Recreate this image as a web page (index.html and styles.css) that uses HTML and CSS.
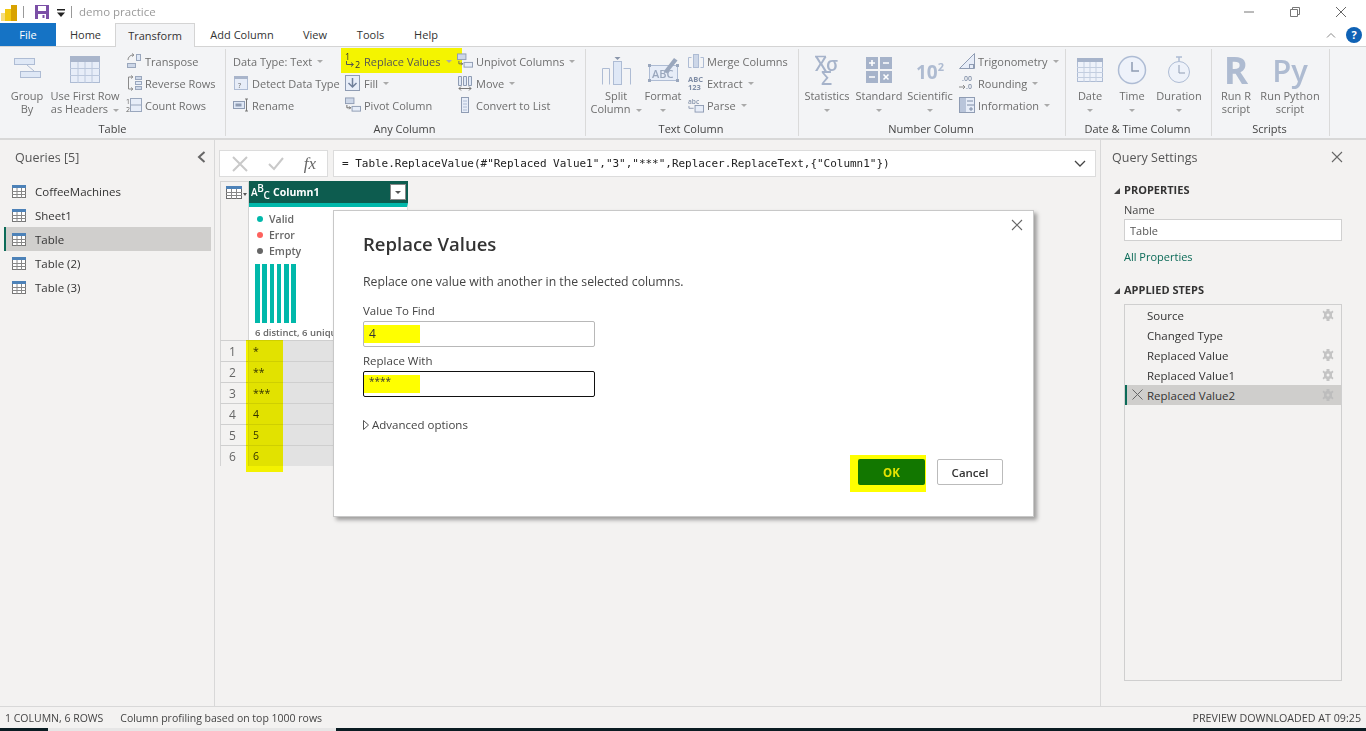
FILE: index.html
```html
<!DOCTYPE html>
<html lang="en">
<head>
<meta charset="utf-8">
<title>demo practice</title>
<link rel="stylesheet" href="styles.css">
</head>
<body>
<div class="app">
  <header class="titlebar">
    <svg class="logo" width="18" height="20" viewBox="0 0 18 20"><rect x="1" y="11" width="6" height="8" fill="#f6dc7a"/><rect x="5" y="7" width="6" height="12" fill="#f2c811"/><rect x="11" y="3" width="6" height="16" fill="#d8a200"/></svg>
    <span class="tsep"></span>
    <svg class="save" width="16" height="16" viewBox="0 0 16 16"><path d="M1 1h14v14H1z" fill="#7b4fa6"/><rect x="4" y="2" width="8" height="5" fill="#fff"/><rect x="4" y="10" width="8" height="5" fill="#fff"/><rect x="8.500" y="11" width="2" height="3" fill="#7b4fa6"/></svg>
    <svg class="qat" width="8" height="8" viewBox="0 0 8 8"><rect x="0" y="0" width="8" height="1.500" fill="#222"/><path d="M0 3.500h8L4 8z" fill="#222"/></svg>
    <span class="tsep tsep2"></span>
    <span class="doc">demo practice</span>
    <div class="winctl">
      <svg width="12" height="12" viewBox="0 0 12 12"><path d="M1 6h10" stroke="#777"/></svg>
      <svg width="12" height="12" viewBox="0 0 12 12"><path d="M1.500 3.500h7v7h-7zM3.500 3.500v-2h7v7h-2" fill="none" stroke="#777"/></svg>
      <svg width="12" height="12" viewBox="0 0 12 12"><path d="M1 1l10 10M11 1L1 11" stroke="#666"/></svg>
    </div>
  </header>

  <nav class="tabs">
    <span class="tab file">File</span>
    <span class="tab home">Home</span>
    <span class="tab active">Transform</span>
    <span class="tab addc">Add Column</span>
    <span class="tab view">View</span>
    <span class="tab tools">Tools</span>
    <span class="tab help">Help</span>
    <div class="tabs-right">
      <svg width="10" height="6" viewBox="0 0 10 6"><path d="M1 5.500l4-4 4 4" fill="none" stroke="#888"/></svg>
      <span class="helpbtn">?</span>
    </div>
  </nav>

  <section class="ribbon">
    <div class="group g-table">
      <div class="gbody">
        <div class="big w44">
          <div class="bicon"><svg width="30" height="32" viewBox="0 0 30 32"><rect x="2.500" y="4.500" width="20" height="6" fill="#dfe8f6" stroke="#aebcd4"/><rect x="8.500" y="17.500" width="20" height="6" fill="#dfe8f6" stroke="#aebcd4"/><path d="M15 11l7 6" stroke="#aebcd4"/></svg></div>
          <span>Group<br>By</span>
        </div>
        <div class="big w72">
          <div class="bicon"><svg width="30" height="28" viewBox="0 0 30 28"><rect x=".5" y=".5" width="29" height="26" fill="#e7edf8" stroke="#aebcd4"/><rect x="0" y="0" width="30" height="6" fill="#a9b5cb"/><path d="M8 6v21M15 6v21M22 6v21M0 12.500h30M0 19.500h30" stroke="#bcc8dd"/></svg></div>
          <span>Use First Row<br>as Headers<i class="caret"></i></span>
        </div>
        <div class="col ml5">
          <div class="item"><svg class="ic" width="16" height="16" viewBox="0 0 16 16"><rect x="10.500" y="1.500" width="4" height="6" fill="#dfe8f6" stroke="#9aa7bd"/><rect x="1.500" y="10.500" width="8" height="4" fill="#cdd7e8" stroke="#9aa7bd"/><path d="M2 7a5 5 0 0 1 5-5M6 .5L8 2 6 3.500" fill="none" stroke="#8a8a8a"/></svg>Transpose</div>
          <div class="item"><svg class="ic" width="16" height="16" viewBox="0 0 16 16"><rect x="9.500" y="1.500" width="6" height="3" fill="#cdd7e8" stroke="#9aa7bd"/><rect x="9.500" y="6.500" width="6" height="3" fill="#dfe8f6" stroke="#9aa7bd"/><rect x="9.500" y="11.500" width="6" height="3" fill="#cdd7e8" stroke="#9aa7bd"/><path d="M6 2H2.500v12H6M5 .5L7 2 5 3.500M5 12.500L7 14l-2 1.500" fill="none" stroke="#8a8a8a"/></svg>Reverse Rows</div>
          <div class="item"><svg class="ic" width="16" height="16" viewBox="0 0 16 16"><rect x="4.500" y="1.500" width="11" height="13" fill="#e7edf8" stroke="#9aa7bd"/><path d="M4.500 8h11" stroke="#9aa7bd"/><text x="0" y="7" class="tiny">1</text><text x="0" y="15" class="tiny">2</text></svg>Count Rows</div>
        </div>
      </div>
      <div class="glabel">Table</div>
    </div>

    <div class="group g-any">
      <div class="gbody">
        <div class="col cw112">
          <div class="item">Data Type: Text<i class="caret"></i></div>
          <div class="item"><svg class="ic" width="16" height="16" viewBox="0 0 16 16"><rect x="1.500" y="1.500" width="13" height="13" fill="#e7edf8" stroke="#aebcd4"/><rect x="1" y="1" width="14" height="3" fill="#a9b5cb"/><text x="5" y="13" class="tiny">?</text></svg>Detect Data Type</div>
          <div class="item"><svg class="ic" width="16" height="16" viewBox="0 0 16 16"><rect x=".5" y="4.500" width="11" height="7" fill="#dfe8f6" stroke="#8f9cb3"/><rect x="2.500" y="6.500" width="6" height="3" fill="#8f9cb3"/><path d="M12 2h3M12 14h3M13.500 2v12" stroke="#777"/></svg>Rename</div>
        </div>
        <div class="col cw112">
          <div class="item hl"><svg class="ic" width="16" height="18" viewBox="0 0 16 18"><text x="0" y="8" class="tinyd">1</text><text x="10" y="16" class="tinyd">2</text><path d="M1.500 9v3.500H8M6 10.500l2.500 2-2.500 2" fill="none" stroke="#555"/></svg>Replace Values<i class="caret"></i></div>
          <div class="item"><svg class="ic" width="16" height="16" viewBox="0 0 16 16"><rect x=".5" y=".5" width="14" height="15" fill="#e7edf8" stroke="#8f9cb3"/><path d="M7.500 3v9M3.500 8l4 4 4-4" fill="none" stroke="#6f7f9a" stroke-width="1.500"/></svg>Fill<i class="caret"></i></div>
          <div class="item"><svg class="ic" width="17" height="16" viewBox="0 0 17 16"><rect x=".5" y=".5" width="9" height="6" fill="#cdd7e8" stroke="#8f9cb3"/><rect x="7.500" y="9.500" width="9" height="5" fill="#e7edf8" stroke="#8f9cb3"/><path d="M2 8v3h4M4.500 9.500L6 11l-1.500 1.500" fill="none" stroke="#666"/></svg>Pivot Column</div>
        </div>
        <div class="col">
          <div class="item"><svg class="ic" width="17" height="16" viewBox="0 0 17 16"><rect x=".5" y=".5" width="9" height="6" fill="#cdd7e8" stroke="#8f9cb3"/><rect x="7.500" y="9.500" width="9" height="5" fill="#e7edf8" stroke="#8f9cb3"/><path d="M2 8v3h4M4.500 9.500L6 11l-1.500 1.500" fill="none" stroke="#666"/></svg>Unpivot Columns<i class="caret"></i></div>
          <div class="item"><svg class="ic" width="16" height="16" viewBox="0 0 16 16"><path d="M1.500 1.500h3v9h-3zM6.500 1.500h3v9h-3zM11.500 1.500h3v9h-3z" fill="#dfe8f6" stroke="#8f9cb3"/><path d="M2 13.500h12M4 11.500l-2 2 2 2M12 11.500l2 2-2 2" fill="none" stroke="#777"/></svg>Move<i class="caret"></i></div>
          <div class="item"><svg class="ic" width="16" height="16" viewBox="0 0 16 16"><rect x="4.500" y=".5" width="7" height="15" fill="#e7edf8" stroke="#8f9cb3"/><path d="M6 4h4M6 7h4M6 10h4M6 13h4" stroke="#aebcd4"/></svg>Convert to List</div>
        </div>
      </div>
      <div class="glabel">Any Column</div>
    </div>

    <div class="group g-text">
      <div class="gbody">
        <div class="big w60">
          <div class="bicon"><svg width="30" height="30" viewBox="0 0 30 30"><rect x="12.500" y="6.500" width="8" height="23" fill="#dfe8f6" stroke="#aebcd4"/><path d="M1.500 29.500v-16h7v16M22.500 13.500h7v16" fill="#f3f4f6" stroke="#aebcd4"/><path d="M13.500 2h6l-3 3z" fill="#8a96ab"/></svg></div>
          <span>Split<br>Column<i class="caret"></i></span>
        </div>
        <div class="big w34">
          <div class="bicon"><svg class="ovis" width="32" height="28" viewBox="0 0 32 28"><rect x="2.500" y="9.500" width="28" height="15" fill="#e7edf8" stroke="#aebcd4"/><path d="M1 8h3v3H1zM29 8h3v3h-3zM1 23h3v3H1zM29 23h3v3h-3z" fill="#9aa7bd"/><text x="5" y="22" class="abc">ABC</text><path d="M17 15L27 2l3.500 2.500L20 17.500z" fill="#9aa7bd"/></svg></div>
          <span>Format<br><i class="caret solo"></i></span>
        </div>
        <div class="col ml8">
          <div class="item"><svg class="ic" width="16" height="16" viewBox="0 0 16 16"><rect x="5.500" y="1.500" width="5" height="13" fill="#cdd7e8" stroke="#aebcd4"/><path d="M3.500 4.500h-3v10h3M12.500 4.500h3v10h-3" fill="none" stroke="#aebcd4"/></svg>Merge Columns</div>
          <div class="item"><span class="ic stack">ABC<br>123</span>Extract<i class="caret"></i></div>
          <div class="item"><svg class="ic" width="17" height="16" viewBox="0 0 17 16"><text x="0" y="7" class="tinyb">abc</text><rect x="7.500" y="8.500" width="9" height="7" fill="#e7edf8" stroke="#8f9cb3"/><path d="M1 9v2.500h5" fill="none" stroke="#8f9cb3"/></svg>Parse<i class="caret"></i></div>
        </div>
      </div>
      <div class="glabel">Text Column</div>
    </div>

    <div class="group g-num">
      <div class="gbody">
        <div class="big w56">
          <div class="bicon"><svg class="ovis" width="30" height="32" viewBox="0 0 30 32"><path d="M3 2.500h11" stroke="#a6b3ca" stroke-width="1.500"/><text x="3" y="17" class="bigsym">X</text><text x="14" y="17" class="bigsym">σ</text><text x="9" y="31" class="bigsym">Σ</text></svg></div>
          <span>Statistics<br><i class="caret solo"></i></span>
        </div>
        <div class="big w48">
          <div class="bicon"><svg width="26" height="26" viewBox="0 0 26 26"><rect width="12" height="12" fill="#a6b3ca"/><rect x="14" width="12" height="12" fill="#a6b3ca"/><rect y="14" width="12" height="12" fill="#a6b3ca"/><rect x="14" y="14" width="12" height="12" fill="#a6b3ca"/><path d="M3 6h6M6 3v6M17 6h6M3 20h6M17.500 17.500l5 5M22.500 17.500l-5 5" stroke="#fff" stroke-width="1.600"/></svg></div>
          <span>Standard<br><i class="caret solo"></i></span>
        </div>
        <div class="big w54">
          <div class="bicon"><span class="ten">10<sup>2</sup></span></div>
          <span>Scientific<br><i class="caret solo"></i></span>
        </div>
        <div class="col ml2">
          <div class="item"><svg class="ic" width="16" height="16" viewBox="0 0 16 16"><path d="M.5 15.500L15.500 .5v15z" fill="#e7edf8" stroke="#8f9cb3"/><rect x="10.500" y="11.500" width="4" height="4" fill="none" stroke="#8f9cb3"/></svg>Trigonometry<i class="caret"></i></div>
          <div class="item"><svg class="ic" width="16" height="16" viewBox="0 0 16 16"><text x="3" y="6" class="tinyb">.00</text><text x="7" y="14" class="tinyb">.0</text><path d="M0 12h6M4 10l2 2-2 2" fill="none" stroke="#8a8a8a"/></svg>Rounding<i class="caret"></i></div>
          <div class="item"><svg class="ic" width="16" height="16" viewBox="0 0 16 16"><rect x=".5" y=".5" width="15" height="15" fill="#e7edf8" stroke="#8f9cb3"/><rect x="1" y="1" width="6" height="14" fill="#b9c5da"/><path d="M8 8h7M8 4h6M10 12h4M12 10v4" stroke="#7f8da6"/></svg>Information<i class="caret"></i></div>
        </div>
      </div>
      <div class="glabel">Number Column</div>
    </div>

    <div class="group g-date">
      <div class="gbody">
        <div class="big w48">
          <div class="bicon"><svg width="26" height="24" viewBox="0 0 26 24"><rect x=".5" y=".5" width="25" height="23" fill="#eef2fa" stroke="#aebcd4"/><rect width="26" height="4" fill="#a6b3ca"/><path d="M7 4v20M13 4v20M19 4v20M0 9.500h26M0 14.500h26M0 19.500h26" stroke="#c3cee0"/></svg></div>
          <span>Date<br><i class="caret solo"></i></span>
        </div>
        <div class="big w36">
          <div class="bicon"><svg width="30" height="30" viewBox="0 0 30 30"><circle cx="15" cy="15" r="13.500" fill="#eef2fa" stroke="#aebcd4" stroke-width="1.500"/><path d="M15 7v9h7" fill="none" stroke="#8f9cb3" stroke-width="1.500"/></svg></div>
          <span>Time<br><i class="caret solo"></i></span>
        </div>
        <div class="big w58">
          <div class="bicon"><svg width="24" height="28" viewBox="0 0 24 28"><path d="M9 1h6M12 1v4" stroke="#aebcd4" stroke-width="1.500"/><circle cx="12" cy="16" r="10.500" fill="#eef2fa" stroke="#aebcd4"/><path d="M12 9v8h6" fill="none" stroke="#8f9cb3"/></svg></div>
          <span>Duration<br><i class="caret solo"></i></span>
        </div>
      </div>
      <div class="glabel">Date &amp; Time Column</div>
    </div>

    <div class="group g-scripts">
      <div class="gbody">
        <div class="big w48">
          <div class="bicon"><span class="rpy">R</span></div>
          <span>Run R<br>script</span>
        </div>
        <div class="big w60">
          <div class="bicon"><span class="rpy py">Py</span></div>
          <span>Run Python<br>script</span>
        </div>
      </div>
      <div class="glabel">Scripts</div>
    </div>
  </section>

  <main class="main">
    <aside class="queries">
      <div class="qhead"><span>Queries [5]</span>
        <svg width="9" height="12" viewBox="0 0 9 12"><path d="M7.500 1L2 6l5.500 5" fill="none" stroke="#666" stroke-width="2"/></svg>
      </div>
      <ul class="qlist">
        <li class="q"><svg class="tbl" width="14" height="13" viewBox="0 0 14 13"><rect x=".5" y=".5" width="13" height="12" fill="#fff" stroke="#777"/><rect width="14" height="3" fill="#4d82b8"/><path d="M5 3v10M9.500 3v10M0 6.500h14M0 9.500h14" stroke="#888"/></svg>CoffeeMachines</li>
        <li class="q"><svg class="tbl" width="14" height="13" viewBox="0 0 14 13"><rect x=".5" y=".5" width="13" height="12" fill="#fff" stroke="#777"/><rect width="14" height="3" fill="#4d82b8"/><path d="M5 3v10M9.500 3v10M0 6.500h14M0 9.500h14" stroke="#888"/></svg>Sheet1</li>
        <li class="q sel"><svg class="tbl" width="14" height="13" viewBox="0 0 14 13"><rect x=".5" y=".5" width="13" height="12" fill="#fff" stroke="#777"/><rect width="14" height="3" fill="#4d82b8"/><path d="M5 3v10M9.500 3v10M0 6.500h14M0 9.500h14" stroke="#888"/></svg>Table</li>
        <li class="q"><svg class="tbl" width="14" height="13" viewBox="0 0 14 13"><rect x=".5" y=".5" width="13" height="12" fill="#fff" stroke="#777"/><rect width="14" height="3" fill="#4d82b8"/><path d="M5 3v10M9.500 3v10M0 6.500h14M0 9.500h14" stroke="#888"/></svg>Table (2)</li>
        <li class="q"><svg class="tbl" width="14" height="13" viewBox="0 0 14 13"><rect x=".5" y=".5" width="13" height="12" fill="#fff" stroke="#777"/><rect width="14" height="3" fill="#4d82b8"/><path d="M5 3v10M9.500 3v10M0 6.500h14M0 9.500h14" stroke="#888"/></svg>Table (3)</li>
      </ul>
    </aside>

    <section class="center">
      <div class="fbar">
        <div class="fbtns">
          <svg width="16" height="16" viewBox="0 0 16 16"><path d="M1 1l14 14M15 1L1 15" stroke="#c9c9c9" stroke-width="2"/></svg>
          <svg width="16" height="14" viewBox="0 0 16 14"><path d="M1 7l5 5L15 1" fill="none" stroke="#c9c9c9" stroke-width="2"/></svg>
          <span class="fx">fx</span>
        </div>
        <div class="formula"><span>= Table.ReplaceValue(#"Replaced Value1","3","***",Replacer.ReplaceText,{"Column1"})</span>
          <svg width="12" height="7" viewBox="0 0 12 7"><path d="M1 1l5 5 5-5" fill="none" stroke="#444" stroke-width="1.300"/></svg>
        </div>
      </div>

      <div class="grid">
        <div class="ghead">
          <div class="corner"><svg width="16" height="13" viewBox="0 0 16 13"><rect x=".5" y=".5" width="15" height="12" fill="#fff" stroke="#6a6a6a"/><rect width="16" height="3" fill="#4d82b8"/><path d="M5.500 3v10M10.500 3v10M0 6.500h16M0 9.500h16" stroke="#888"/></svg><i class="caret dark"></i></div>
          <div class="colhead"><span class="abcbadge">A<sup>B</sup><sub>C</sub></span><span class="colname">Column1</span><span class="filter"><i class="caret dark"></i></span></div>
        </div>
        <div class="gprof">
          <div class="rownum-spacer"></div>
          <div class="profile">
            <div class="qual"><i class="dot teal"></i>Valid</div>
            <div class="qual"><i class="dot red"></i>Error</div>
            <div class="qual"><i class="dot grey"></i>Empty</div>
            <div class="bars"><i></i><i></i><i></i><i></i><i></i><i></i></div>
            <div class="distinct">6 distinct, 6 unique</div>
          </div>
        </div>
        <div class="row"><span class="n">1</span><span class="v">*</span></div>
        <div class="row"><span class="n">2</span><span class="v">**</span></div>
        <div class="row"><span class="n">3</span><span class="v">***</span></div>
        <div class="row"><span class="n">4</span><span class="v">4</span></div>
        <div class="row"><span class="n">5</span><span class="v">5</span></div>
        <div class="row"><span class="n">6</span><span class="v">6</span></div>
        <div class="colmark"></div>
      </div>
    </section>

    <aside class="settings">
      <div class="shead"><span>Query Settings</span>
        <svg width="12" height="12" viewBox="0 0 12 12"><path d="M1 1l10 10M11 1L1 11" stroke="#666" stroke-width="1.100"/></svg>
      </div>
      <h3 class="sect"><i class="tri"></i>PROPERTIES</h3>
      <label class="nm">Name</label>
      <div class="nameinput">Table</div>
      <a class="allprops">All Properties</a>
      <h3 class="sect steps-h"><i class="tri"></i>APPLIED STEPS</h3>
      <ul class="steps">
        <li class="step">Source<svg class="gear" width="12" height="12" viewBox="0 0 12 12"><path d="M4.500 0h3v2l1.500.7L10.500 1.500l1 1.500L10 4.500V7.500l1.500 1.500-1 1.500L9 9.300 7.500 10v2h-3v-2L3 9.300 1.500 10.500l-1-1.500L2 7.500v-3L.5 3l1-1.500L3 2.700 4.500 2z" fill="#c4c4c4"/><circle cx="6" cy="6" r="1.500" fill="#f3f2f1"/></svg></li>
        <li class="step">Changed Type</li>
        <li class="step">Replaced Value<svg class="gear" width="12" height="12" viewBox="0 0 12 12"><path d="M4.500 0h3v2l1.500.7L10.500 1.500l1 1.500L10 4.500V7.500l1.500 1.500-1 1.500L9 9.300 7.500 10v2h-3v-2L3 9.300 1.500 10.500l-1-1.500L2 7.500v-3L.5 3l1-1.500L3 2.700 4.500 2z" fill="#c4c4c4"/><circle cx="6" cy="6" r="1.500" fill="#f3f2f1"/></svg></li>
        <li class="step">Replaced Value1<svg class="gear" width="12" height="12" viewBox="0 0 12 12"><path d="M4.500 0h3v2l1.500.7L10.500 1.500l1 1.500L10 4.500V7.500l1.500 1.500-1 1.500L9 9.300 7.500 10v2h-3v-2L3 9.300 1.500 10.500l-1-1.500L2 7.500v-3L.5 3l1-1.500L3 2.700 4.500 2z" fill="#c4c4c4"/><circle cx="6" cy="6" r="1.500" fill="#f3f2f1"/></svg></li>
        <li class="step cur"><svg class="del" width="11" height="11" viewBox="0 0 11 11"><path d="M.5.500l10 10M10.500.5l-10 10" stroke="#666"/></svg>Replaced Value2<svg class="gear" width="12" height="12" viewBox="0 0 12 12"><path d="M4.500 0h3v2l1.500.7L10.500 1.500l1 1.500L10 4.500V7.500l1.500 1.500-1 1.500L9 9.300 7.500 10v2h-3v-2L3 9.300 1.500 10.500l-1-1.500L2 7.500v-3L.5 3l1-1.500L3 2.700 4.500 2z" fill="#bdbdbd"/><circle cx="6" cy="6" r="1.500" fill="#cfcecc"/></svg></li>
      </ul>
    </aside>
  </main>

  <footer class="status">
    <span class="st1">1 COLUMN, 6 ROWS</span>
    <span>Column profiling based on top 1000 rows</span>
    <span class="st-r">PREVIEW DOWNLOADED AT 09:25</span>
  </footer>
  <div class="strip"><i></i></div>

  <div class="dialog">
    <svg class="dclose" width="12" height="12" viewBox="0 0 12 12"><path d="M1 1l10 10M11 1L1 11" stroke="#666" stroke-width="1.100"/></svg>
    <h2>Replace Values</h2>
    <p class="desc">Replace one value with another in the selected columns.</p>
    <label class="flabel">Value To Find</label>
    <div class="field"><span class="mark">4</span></div>
    <label class="flabel l2">Replace With</label>
    <div class="field focus"><span class="mark stars">****</span></div>
    <div class="adv"><svg width="6" height="10" viewBox="0 0 6 10"><path d="M.5.500l5 4.500-5 4.500z" fill="#fff" stroke="#555"/></svg>Advanced options</div>
    <div class="dbtns">
      <span class="okwrap"><button class="ok">OK</button></span>
      <button class="cancel">Cancel</button>
    </div>
  </div>
</div>
</body>
</html>
```

FILE: styles.css
```css
* { box-sizing: border-box; }
html, body { margin: 0; padding: 0; height: 100%; overflow: hidden; }
body { font-family: "Open Sans", "Noto Sans", sans-serif; font-size: 11px; color: #444; background: #f3f2f1; }
.app { position: relative; width: 1366px; height: 731px; display: flex; flex-direction: column; overflow: hidden; }
ul { list-style: none; margin: 0; padding: 0; }
h2, h3, p { margin: 0; }
i { font-style: normal; }

/* title bar */
.titlebar { height: 23px; background: #fff; display: flex; align-items: center; flex: none; }
.tsep { width: 1px; height: 12px; background: #999; margin-left: 5px; }
.save { margin-left: 10px; }
.qat { margin-left: 7px; margin-top: 3px; }
.tsep2 { margin-left: 6px; }
.doc { margin-left: 7px; color: #9a9a9a; font-size: 11.500px; }
.winctl { margin-left: auto; display: flex; gap: 34px; padding-right: 19px; }

/* tabs */
.tabs { height: 23px; background: #fff; display: flex; flex: none; position: relative; z-index: 2; }
.tab { display: flex; align-items: center; justify-content: center; color: #333; font-size: 11px; height: 23px; }
.tab.file { width: 56px; background: #1573c5; color: #fff; }
.tab.home { width: 59px; }
.tab.active { width: 80px; background: #f3f4f6; border: 1px solid #d4d4d4; border-bottom: 0; height: 24px; }
.tab.addc { width: 92px; padding-left: 2px; }
.tab.view { width: 56px; }
.tab.tools { width: 55px; }
.tab.help { width: 56px; }
.tabs-right { margin-left: auto; display: flex; align-items: center; gap: 10px; padding-right: 4px; }
.helpbtn { width: 16px; height: 16px; border-radius: 50%; background: #0f62b5; color: #fff; font-weight: 700; font-size: 11px; display: flex; align-items: center; justify-content: center; }

/* ribbon */
.ribbon { height: 92px; flex: none; display: flex; background: #f3f4f6; border-top: 1px solid #d4d4d4; isolation: isolate; }
.group { display: flex; flex-direction: column; margin: 2px 0; border-right: 1px solid #dadada; color: #6e6e6e; }
.g-table { width: 226px; padding-left: 5px; }
.g-any { width: 360px; padding-left: 7px; }
.g-text { width: 213px; }
.g-num { width: 267px; }
.g-date { width: 146px; }
.g-scripts { width: 118px; }
.gbody { flex: 1; display: flex; padding-top: 1px; min-height: 0; }
.glabel { height: 15px; line-height: 15px; text-align: center; color: #444; font-size: 11px; padding-right: 2px; }
.g-any .glabel { padding-right: 9px; }
.g-table .glabel { padding-right: 5px; }

.big { display: flex; flex-direction: column; align-items: center; text-align: center; line-height: 13px; }
.bicon { height: 39px; display: flex; align-items: center; justify-content: center; }
.w34 { width: 34px; } .w36 { width: 36px; } .w44 { width: 44px; } .w48 { width: 48px; }
.w54 { width: 54px; } .w56 { width: 56px; } .w58 { width: 58px; } .w60 { width: 60px; } .w72 { width: 72px; }
.col { display: flex; flex-direction: column; }
.cw112 { width: 112px; }
.ml2 { margin-left: 2px; } .ml5 { margin-left: 5px; } .ml8 { margin-left: 8px; }
.item { height: 22px; display: flex; align-items: center; white-space: nowrap; position: relative; }
.item.hl { color: #555; }
.item.hl::before { content: ""; position: absolute; z-index: -1; left: -4px; top: -2px; width: 121px; height: 25px; background: #f4f400; }
.ic { width: 16px; margin-right: 3px; flex: none; overflow: visible; }
.ovis { overflow: visible; }
.caret { display: inline-block; width: 0; height: 0; border: 3px solid transparent; border-top: 3px solid #aaa; border-bottom: 0; margin-left: 5px; vertical-align: middle; }
.caret.solo { margin-left: 0; }
.caret.dark { border-top-color: #555; }
.tiny { font-size: 7px; fill: #666; font-family: "Open Sans", sans-serif; }
.tinyd { font-size: 9px; fill: #333; font-family: "Open Sans", sans-serif; }
.tinyb { font-size: 7px; font-weight: 600; fill: #8492aa; font-family: "Open Sans", sans-serif; }
.abc { font-size: 11px; font-weight: 600; fill: #9aa7bd; font-family: "Open Sans", sans-serif; }
.bigsym { font-size: 19px; font-weight: 600; fill: #a6b3ca; font-family: "Open Sans", sans-serif; }
.stack { font-size: 7.500px; line-height: 8px; color: #7f8da6; font-weight: 700; }
.ten { color: #aebbd1; font-size: 19px; font-weight: 700; line-height: 1; padding-top: 6px; }
.ten sup { font-size: 11px; vertical-align: 8px; line-height: 0; }
.rpy { color: #aebbd1; font-size: 37px; font-weight: 700; line-height: 30px; height: 30px; }
.rpy.py { font-size: 31px; font-weight: 600; }

/* main */
.main { flex: 1; min-height: 0; display: flex; border-top: 2px solid #d8d8d8; }
.queries { width: 215px; flex: none; border-right: 1px solid #d8d8d8; padding-left: 4px; }
.qhead { height: 39px; display: flex; align-items: center; justify-content: space-between; padding: 0 8px 5px 11px; font-size: 12.500px; color: #555; }
.q { height: 24px; display: flex; align-items: center; padding-left: 8px; margin-right: 3px; color: #333; font-size: 11.500px; }
.tbl { margin-right: 9px; }
.q.sel { background: #d0cfcd; border-left: 2px solid #0b6b58; padding-left: 6px; }

.center { flex: 1; min-width: 0; position: relative; }
.fbar { display: flex; gap: 5px; padding: 10px 4px 0 4px; }
.fbtns { width: 109px; height: 27px; background: #fff; border: 1px solid #dcdcdc; display: flex; align-items: center; justify-content: space-between; padding: 0 11px 0 12px; }
.fx { font-family: "Liberation Serif", serif; font-style: italic; font-size: 17px; color: #666; }
.formula { flex: 1; height: 27px; background: #fff; border: 1px solid #dcdcdc; display: flex; align-items: center; justify-content: space-between; padding: 0 9px 0 8px; font-family: "DejaVu Sans Mono", monospace; font-size: 11px; letter-spacing: -0.025px; color: #222; white-space: nowrap; }

.grid { position: relative; width: 189px; margin: 4px 0 0 5px; }
.ghead { display: flex; height: 22px; }
.corner { width: 29px; background: #f3f2f1; border: 1px solid #d4d4d4; border-bottom: 0; display: flex; align-items: center; padding-left: 5px; }
.corner .caret { margin-left: 1px; margin-top: 3px; border-width: 2.500px; border-bottom: 0; border-top-width: 3px; }
.colhead { width: 159px; background: #0d5c4f; display: flex; align-items: center; color: #fff; font-weight: 700; font-size: 10.500px; padding-left: 2px; }
.abcbadge { font-size: 10px; font-weight: 600; width: 22px; line-height: 1; white-space: nowrap; letter-spacing: -0.300px; }
.abcbadge sup, .abcbadge sub { font-size: 10px; line-height: 0; }
.colname { flex: 1; }
.filter { width: 16px; height: 16px; background: #fff; margin-right: 2px; border: 1px solid #888; display: flex; align-items: center; justify-content: center; }
.filter .caret { margin: 0; }
.gprof { display: flex; height: 137px; }
.rownum-spacer { width: 29px; border-left: 1px solid #d4d4d4; border-right: 1px solid #d4d4d4; }
.profile { width: 159px; background: #fff; border-top: 4px solid #01b8aa; padding: 4px 0 0 6px; color: #666; border-right: 1px solid #e0e0e0; overflow: hidden; }
.qual { height: 16px; display: flex; align-items: center; font-size: 10.500px; font-weight: 600; color: #666; }
.dot { width: 6px; height: 6px; border-radius: 50%; margin: 0 6px 0 2px; }
.teal { background: #01b8aa; } .red { background: #fd625e; } .grey { background: #666; }
.bars { display: flex; gap: 2.700px; height: 59px; margin-top: 5px; }
.bars i { width: 4.600px; background: #01b8aa; }
.distinct { font-size: 9.500px; font-weight: 600; color: #666; margin-top: 3px; white-space: nowrap; }
.row { display: flex; height: 21px; border-top: 1px solid #cfcfcf; border-left: 1px solid #d4d4d4; background: #e2e2e2; }
.row:last-of-type { border-bottom: 1px solid #cfcfcf; height: 22px; }
.n { width: 28px; background: #f3f2f1; color: #666; text-align: center; font-size: 12px; line-height: 22px; border-right: 1px solid #d4d4d4; padding-right: 4px; }
.v { padding-left: 4px; color: #333; font-size: 10.500px; line-height: 20px; }
.colmark { position: absolute; left: 26px; top: 159px; width: 37px; height: 132px; background: #ffff00; mix-blend-mode: multiply; }

/* settings */
.settings { width: 266px; flex: none; border-left: 1px solid #d8d8d8; padding: 0 24px 0 23px; position: relative; }
.shead { height: 38px; display: flex; align-items: center; justify-content: space-between; margin: 0 -1px 0 -12px; font-size: 12.500px; color: #555; padding-bottom: 4px; }
.sect { font-size: 11px; font-weight: 700; color: #333; height: 23px; line-height: 24px; position: relative; }
.tri { position: absolute; left: -10px; top: 10px; border: 3.500px solid transparent; border-right-color: #444; border-bottom-color: #444; }
.nm { display: block; height: 18px; line-height: 17px; color: #444; font-size: 11px; }
.nameinput { height: 22px; width: 218px; background: #fff; border: 1px solid #d0d0d0; padding-left: 5px; line-height: 21px; color: #555; font-size: 11px; }
.allprops { display: block; color: #0b6b58; font-size: 11px; margin-top: 8px; height: 16px; line-height: 16px; }
.steps-h { margin-top: 13px; }
.steps { margin-top: 3px; width: 218px; height: 377px; border: 1px solid #cfcfcf; }
.step { height: 20px; display: flex; align-items: center; padding-left: 22px; color: #333; font-size: 11.500px; position: relative; }
.gear { position: absolute; right: 7px; top: 4px; }
.step.cur { background: #cfcecc; border-left: 2px solid #0b6b58; padding-left: 20px; }
.del { position: absolute; left: 5px; top: 4px; }

/* status */
.status { height: 22px; flex: none; border-top: 1px solid #d8d8d8; display: flex; align-items: center; padding: 0 5px; font-size: 10.500px; color: #444; }
.st1 { margin-right: 17px; }
.st-r { margin-left: auto; font-size: 10.700px; }
.strip { height: 3px; flex: none; background: #0a1c22; padding-left: 48px; }
.strip i { display: block; width: 288px; height: 3px; background: #e6e6e6; }

/* dialog */
.dialog { position: absolute; left: 333px; top: 210px; width: 701px; height: 307px; background: #fff; border: 1px solid #c8c8c8; box-shadow: 3px 3px 4px rgba(0,0,0,.35); padding: 21px 30px 0 29px; color: #444; }
.dclose { position: absolute; right: 10px; top: 8px; }
.dialog h2 { font-size: 18.500px; font-weight: 600; color: #333; line-height: 24px; }
.desc { margin-top: 17px; font-size: 12.250px; line-height: 18px; color: #444; }
.flabel { display: block; margin-top: 12px; line-height: 16px; font-size: 11.500px; color: #444; }
.flabel.l2 { margin-top: 6px; }
.field { width: 232px; height: 26px; margin-top: 2px; border: 1px solid #b8b8b8; border-radius: 2px; padding-top: 3px; background: #fff; }
.field.focus { border-color: #111; border-width: 1.500px; }
.mark { display: block; width: 56px; height: 18px; background: #ffff00; padding-left: 5px; line-height: 18px; color: #333; font-size: 12px; }
.stars { line-height: 13px; font-size: 10px; }
.adv { margin-top: 20px; display: flex; align-items: center; gap: 3px; font-size: 11.500px; line-height: 16px; color: #444; }
.dbtns { display: flex; justify-content: flex-end; align-items: flex-start; margin-top: 23px; }
.okwrap { background: #ffff00; padding: 4px 1px 7px 8px; display: block; margin-top: -1px; margin-right: 11px; height: 37px; }
button { font-family: "Open Sans", sans-serif; font-size: 11.500px; height: 26px; border-radius: 2px; padding: 0; display: block; }
.ok { width: 67px; background: #127700; border: 0; color: #e4e400; font-weight: 700; }
.cancel { width: 66px; background: #fff; border: 1px solid #bbb; color: #333; font-weight: 600; margin-top: 3px; }
```
